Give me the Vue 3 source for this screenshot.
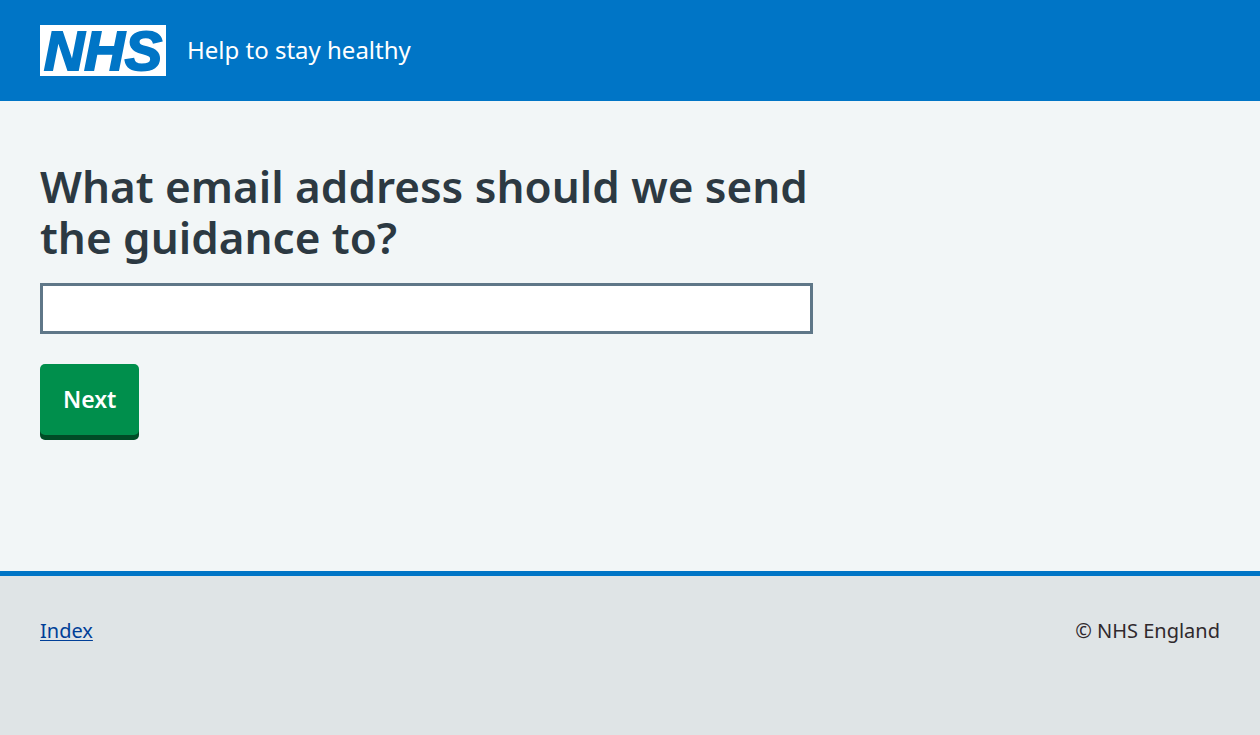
<script setup>
import { ref } from 'vue'

const email = ref('')
</script>

<template>
  <div class="page">
    <header class="header">
      <a class="brand" href="#">
        <svg class="logo" viewBox="0 0 126 51" role="img" aria-label="NHS">
          <rect width="126" height="51" fill="#ffffff" />
          <text class="logo-text" x="63" y="45" text-anchor="middle">NHS</text>
        </svg>
        <span class="service">Help to stay healthy</span>
      </a>
    </header>
    <main class="main">
      <form class="form" @submit.prevent>
        <h1 class="heading">
          <label for="email">What email address should we send the guidance to?</label>
        </h1>
        <input id="email" v-model="email" class="input" type="email" autocomplete="email" />
        <button class="button" type="submit">Next</button>
      </form>
    </main>
    <footer class="footer">
      <a class="link" href="#">Index</a>
      <p class="copyright">© NHS England</p>
    </footer>
  </div>
</template>

<style>
body {
  margin: 0;
  background: #dfe4e6;
}
</style>

<style scoped>
.page {
  display: flex;
  flex-direction: column;
  min-height: 100vh;
  box-sizing: border-box;
  background: #f2f6f7;
  color: #2c3942;
  font-family: "Noto Sans", "Open Sans", sans-serif;
}
.header {
  padding: 25px 40px;
  background: #0075c6;
}
.brand {
  display: inline-flex;
  align-items: center;
  gap: 21px;
  color: #ffffff;
  text-decoration: none;
  vertical-align: top;
}
.logo {
  display: block;
  width: 126px;
  height: 51px;
  overflow: visible;
}
.logo-text {
  fill: #0075c6;
  stroke: #0075c6;
  stroke-width: 2;
  font-family: "Liberation Sans", Arial, sans-serif;
  font-size: 56px;
  font-weight: 700;
  font-style: italic;
}
.service {
  padding-bottom: 2px;
  font-size: 24px;
  line-height: 32px;
}
.main {
  flex: 1;
  padding: 60px 40px;
}
.form {
  display: flex;
  flex-direction: column;
  align-items: flex-start;
  max-width: 773px;
}
.heading {
  margin: 0 0 20px;
  font-size: 44px;
  line-height: 51px;
  font-weight: 600;
}
.input {
  box-sizing: border-box;
  width: 100%;
  height: 51px;
  padding: 5px;
  border: 3px solid #5f7788;
  border-radius: 0;
  background: #ffffff;
  color: #2c3942;
  font: inherit;
  font-size: 24px;
}
.button {
  margin: 30px 0 5px;
  padding: 20px 23px;
  border: 0;
  border-radius: 5px;
  background: #008f4c;
  box-shadow: 0 5px 0 #004c26;
  color: #ffffff;
  font: inherit;
  font-size: 23px;
  font-weight: 600;
  line-height: 31px;
  cursor: pointer;
}
.footer {
  display: flex;
  justify-content: space-between;
  align-items: flex-start;
  padding: 40px 40px 89px;
  border-top: 5px solid #0075c6;
  background: #dfe4e6;
  font-size: 20px;
  line-height: 30px;
}
.link {
  color: #003f98;
  text-decoration-color: #003f98;
  text-decoration-thickness: 1px;
  text-underline-offset: 2px;
}
.copyright {
  margin: 0;
  color: #30292d;
}
</style>
